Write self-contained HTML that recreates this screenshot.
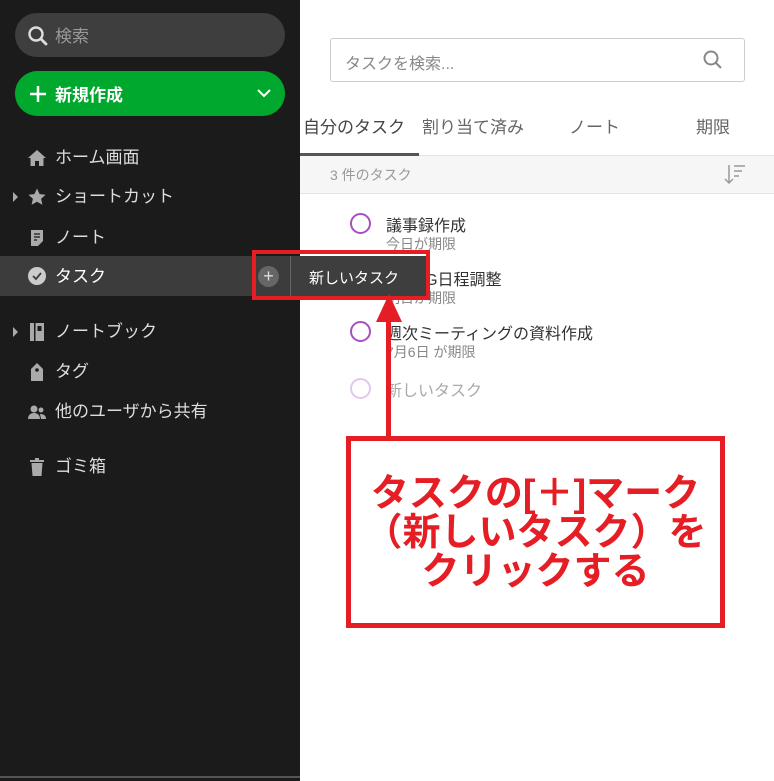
<!DOCTYPE html>
<html><head><meta charset="utf-8"><style>
*{margin:0;padding:0;box-sizing:border-box}
body{width:774px;height:781px;overflow:hidden;background:#fff;font-family:"Liberation Sans","Noto Sans CJK JP",sans-serif;position:relative}
.abs{position:absolute}
#side{left:0;top:0;width:300px;height:781px;background:#1b1b1b}
.item{position:absolute;left:0;width:300px;height:40px;color:#ddd;font-size:17px;line-height:40px;padding-left:55px}
.ic{position:absolute;left:28px;top:11px;width:18px;height:18px}
.tri{position:absolute;left:13px;top:15px;width:0;height:0;border-left:5px solid #aaa;border-top:5px solid transparent;border-bottom:5px solid transparent}
.task{position:absolute;left:350px}
.circ{position:absolute;left:0;width:21px;height:21px;border:2px solid #a64fc4;border-radius:50%}
.t1{position:absolute;left:36px;font-size:16px;color:#333;white-space:nowrap}
.t2{position:absolute;left:36px;font-size:14px;color:#888;white-space:nowrap}
</style></head><body>
<div id="side" class="abs">
 <div class="abs" style="left:15px;top:13px;width:270px;height:44px;border-radius:22px;background:#3e3e3e"></div>
 <svg class="abs" style="left:27px;top:25px" width="22" height="22" viewBox="0 0 22 22"><circle cx="9" cy="9" r="6.5" fill="none" stroke="#ddd" stroke-width="2.4"/><path d="M14 14l5 5" stroke="#ddd" stroke-width="2.8" stroke-linecap="round"/></svg>
 <div class="abs" style="left:55px;top:22px;font-size:17px;color:#999">検索</div>
 <div class="abs" style="left:15px;top:71px;width:270px;height:45px;border-radius:23px;background:#00a82d"></div>
 <svg class="abs" style="left:29px;top:85px" width="18" height="18"><path d="M9 1v16M1 9h16" stroke="#fff" stroke-width="2.5"/></svg>
 <div class="abs" style="left:55px;top:81px;font-size:17px;color:#fff;font-weight:bold">新規作成</div>
 <svg class="abs" style="left:256px;top:88px" width="16" height="10"><path d="M2 2l6 6 6-6" fill="none" stroke="#fff" stroke-width="2"/></svg>

 <div class="item" style="top:138px"><svg class="ic" viewBox="0 0 18 18"><path d="M9 1L0 9h2.5v8h4.5v-5h4v5h4.5v-8H18z" fill="#aaa"/></svg>ホーム画面</div>
 <div class="item" style="top:177px"><div class="tri"></div><svg class="ic" viewBox="0 0 18 18"><path d="M9 0.5l2.6 5.6 6 .6-4.5 4.1 1.3 6L9 13.8l-5.4 3 1.3-6L.4 6.7l6-.6z" fill="#aaa"/></svg>ショートカット</div>
 <div class="item" style="top:218px"><svg class="ic" viewBox="0 0 18 18"><path d="M3 1h12v11l-5 5H3z" fill="#aaa"/><path d="M6 5h6M6 8h6M6 11h3" stroke="#1b1b1b" stroke-width="1.3"/></svg>ノート</div>
 <div class="item" style="top:256px;background:#3c3c3c;color:#fff;line-height:42px"><svg class="ic" viewBox="0 0 18 18"><circle cx="9" cy="9" r="9" fill="#ccc"/><path d="M5 9l3 3 5-6" fill="none" stroke="#3c3c3c" stroke-width="1.8"/></svg>タスク</div>
 <div class="item" style="top:312px"><div class="tri"></div><svg class="ic" viewBox="0 0 18 18"><rect x="2" y="0" width="14" height="18" fill="#aaa"/><rect x="6" y="0" width="1.5" height="18" fill="#1b1b1b"/><rect x="9.5" y="3" width="4" height="5" fill="#1b1b1b"/></svg>ノートブック</div>
 <div class="item" style="top:352px"><svg class="ic" viewBox="0 0 18 18"><path d="M9 0l6 6v12H3V6z" fill="#aaa"/><circle cx="9" cy="7" r="1.8" fill="#1b1b1b"/></svg>タグ</div>
 <div class="item" style="top:392px"><svg class="ic" viewBox="0 0 18 18"><circle cx="6" cy="6" r="3.5" fill="#aaa"/><path d="M0 16c0-4 2.5-6 6-6s6 2 6 6z" fill="#aaa"/><circle cx="13" cy="7" r="2.5" fill="#aaa"/><path d="M12 11c3 0 6 1 6 5h-5z" fill="#aaa"/></svg>他のユーザから共有</div>
 <div class="item" style="top:447px"><svg class="ic" viewBox="0 0 18 18"><rect x="2" y="2" width="14" height="2" fill="#aaa"/><rect x="7" y="0" width="4" height="2" fill="#aaa"/><path d="M3.5 5h11l-1 13h-9z" fill="#aaa"/></svg>ゴミ箱</div>
 <div class="abs" style="left:0;top:776px;width:300px;height:2px;background:#555"></div>
</div>

<!-- main -->
<div class="abs" style="left:330px;top:38px;width:415px;height:44px;border:1px solid #ccc;border-radius:3px"></div>
<div class="abs" style="left:345px;top:50px;font-size:16px;color:#888">タスクを検索...</div>
<svg class="abs" style="left:702px;top:49px" width="22" height="22"><circle cx="9" cy="9" r="6.5" fill="none" stroke="#888" stroke-width="2"/><path d="M14 14l5 5" stroke="#888" stroke-width="2"/></svg>
<div class="abs" style="left:303px;top:113px;font-size:17px;color:#444">自分のタスク</div>
<div class="abs" style="left:422px;top:113px;font-size:17px;color:#666">割り当て済み</div>
<div class="abs" style="left:569px;top:113px;font-size:17px;color:#666">ノート</div>
<div class="abs" style="left:696px;top:113px;font-size:17px;color:#666">期限</div>
<div class="abs" style="left:300px;top:155px;width:474px;height:39px;background:#f6f6f6;border-top:1px solid #e4e4e4;border-bottom:1px solid #e4e4e4"></div>
<div class="abs" style="left:300px;top:153px;width:119px;height:3px;background:#555"></div>
<div class="abs" style="left:330px;top:165px;font-size:14px;color:#999">3 件のタスク</div>
<svg class="abs" style="left:724px;top:163px" width="24" height="24"><path d="M5 2v18M1 16l4 4 4-4" fill="none" stroke="#999" stroke-width="1.5"/><path d="M10 3h11M10 8h8M10 13h5" stroke="#999" stroke-width="1.5"/></svg>

<div class="task" style="top:213px"><div class="circ"></div><div class="t1" style="top:-1px">議事録作成</div><div class="t2" style="top:21px">今日が期限</div></div>
<div class="task" style="top:267px"><div class="circ"></div><div class="t1" style="top:-1px">月MTG日程調整</div><div class="t2" style="top:21px">明日が期限</div></div>
<div class="task" style="top:321px"><div class="circ"></div><div class="t1" style="top:-1px">週次ミーティングの資料作成</div><div class="t2" style="top:21px">7月6日 が期限</div></div>
<div class="task" style="top:378px"><div class="circ" style="border-color:#e3c6ee"></div><div class="t1" style="top:-1px;color:#aaa">新しいタスク</div></div>

<!-- popup -->
<div class="abs" style="left:290px;top:256px;width:136px;height:42px;background:#3e3e3e;border-left:1px solid #666;z-index:5"></div>
<div class="abs" style="left:258px;top:266px;width:21px;height:21px;border-radius:50%;background:#666;color:#ddd;font-size:18px;line-height:20px;text-align:center;z-index:5">+</div>
<div class="abs" style="left:309px;top:267px;font-size:15px;color:#fff;z-index:6">新しいタスク</div>
<div class="abs" style="left:252px;top:250px;width:178px;height:50px;border:4px solid #e51d24;z-index:7"></div>

<!-- arrow -->
<div class="abs" style="left:386px;top:318px;width:5px;height:120px;background:#e51d24;z-index:8"></div>
<svg class="abs" style="left:376px;top:294px;z-index:8" width="26" height="28"><path d="M13 0L26 28H0z" fill="#e51d24"/></svg>
<div class="abs" style="left:346px;top:436px;width:379px;height:192px;border:5px solid #e51d24;background:#fff;z-index:8"></div>
<div class="abs" style="left:346px;top:475px;width:379px;text-align:center;color:#e51d24;font-size:38px;font-weight:bold;line-height:39px;white-space:nowrap;z-index:9">タスクの[＋]マーク<br>（新しいタスク）を<br>クリックする</div>
</body></html>
